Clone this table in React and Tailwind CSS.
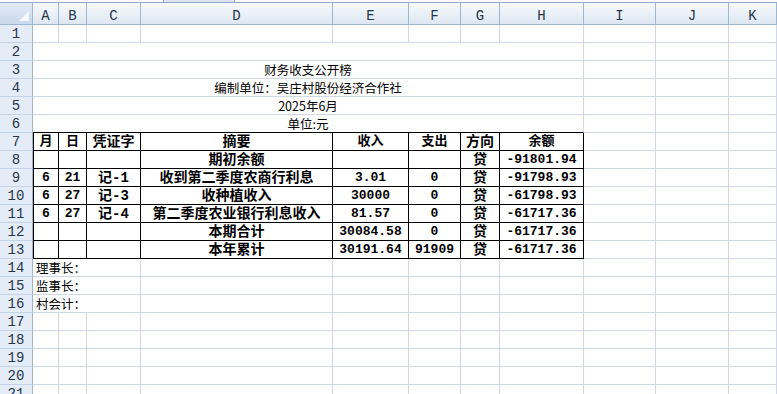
import React from 'react';

const COLS = ['A', 'B', 'C', 'D', 'E', 'F', 'G', 'H', 'I', 'J', 'K'];

const cell = 'border-r border-b border-[#d0d7e5] overflow-hidden whitespace-nowrap flex items-center leading-[16px]';
const rowHead = "bg-[#e4ecf7] border-r border-r-[#9eb6ce] border-b border-b-[#c5d3e6] flex items-center justify-center pt-[2px] leading-[15px] text-[14px] text-[#27364a] font-['Liberation_Mono',monospace]";
const tableCell = 'border-r border-b border-black overflow-hidden whitespace-nowrap flex items-center justify-center font-bold leading-[16px]';

const title = ['', '财务收支公开榜', '编制单位：吴庄村股份经济合作社', '2025年6月', '单位:元'];

const rows = [
  ['月', '日', '凭证字', '摘要', '收入', '支出', '方向', '余额'],
  ['', '', '', '期初余额', '', '', '贷', '-91801.94'],
  ['6', '21', '记-1', '收到第二季度农商行利息', '3.01', '0', '贷', '-91798.93'],
  ['6', '27', '记-3', '收种植收入', '30000', '0', '贷', '-61798.93'],
  ['6', '27', '记-4', '第二季度农业银行利息收入', '81.57', '0', '贷', '-61717.36'],
  ['', '', '', '本期合计', '30084.58', '0', '贷', '-61717.36'],
  ['', '', '', '本年累计', '30191.64', '91909', '贷', '-61717.36'],
];

// numeric columns get the narrower mono size
const numCol = [true, true, false, false, true, true, false, true];

const signers = ['理事长：', '监事长：', '村会计：'];

function Blank({ n }) {
  return Array.from({ length: n }).map((_, i) => <div key={i} className={cell} />);
}

export default function App() {
  return (
    <div className="w-[777px] h-[394px] overflow-hidden bg-white font-['Noto_Sans_CJK_SC',sans-serif] text-black">
      {/* strip under the formula bar */}
      <div className="h-[3px] border-b border-[#8fa9cc] flex">
        <div className="ml-[163px] w-[72px] h-[2px] bg-[#dbe5f2] border-x border-[#8fa9cc]" />
      </div>

      <div className="grid grid-cols-[33px_26px_28px_54px_192px_76px_52px_39px_84px_72px_73px_1fr] grid-rows-[22px] auto-rows-[18px]">
        {/* column headers */}
        <div className="bg-gradient-to-b from-[#e3ebf6] to-[#c9d8ec] border-r border-b border-[#9eb6ce] flex items-end justify-end pr-[3px] pb-[3px]">
          <svg width="10" height="10" viewBox="0 0 10 10">
            <polygon points="10,0 10,10 0,10" fill="#f4f7fb" />
          </svg>
        </div>
        {COLS.map((c) => (
          <div
            key={c}
            className="bg-gradient-to-b from-[#f7fafd] to-[#dde7f3] border-r border-b border-[#9eb6ce] flex items-center justify-center pt-[5px] leading-[15px] text-[14px] text-[#27364a] font-['Liberation_Mono',monospace]"
          >
            {c}
          </div>
        ))}

        {/* row 1 */}
        <div className={rowHead}>1</div>
        <Blank n={11} />

        {/* rows 2-6: merged title block A:H */}
        {title.map((t, i) => (
          <React.Fragment key={i}>
            <div className={rowHead}>{i + 2}</div>
            <div
              className={`col-span-8 ${cell} justify-center text-[12.5px] ${i === 4 ? 'border-b-black' : ''}`}
            >
              {t}
            </div>
            <Blank n={3} />
          </React.Fragment>
        ))}

        {/* rows 7-13: the ledger */}
        {rows.map((r, i) => (
          <React.Fragment key={i}>
            <div className={rowHead}>{i + 7}</div>
            {r.map((v, j) => (
              <div
                key={j}
                className={`${tableCell} ${j === 0 ? 'border-l' : ''} ${
                  numCol[j] ? "text-[13px] font-['Liberation_Mono','Noto_Sans_CJK_SC',monospace]" : "text-[14px] font-['Liberation_Mono','Noto_Sans_CJK_SC',monospace]"
                }`}
              >
                {v}
              </div>
            ))}
            <Blank n={3} />
          </React.Fragment>
        ))}

        {/* rows 14-16: signatures, A:C merged */}
        {signers.map((s, i) => (
          <React.Fragment key={s}>
            <div className={rowHead}>{i + 14}</div>
            <div className={`col-span-3 ${cell} pl-[3px] text-[12.5px]`}>{s}</div>
            <Blank n={8} />
          </React.Fragment>
        ))}

        {/* rows 17-21 */}
        {[17, 18, 19, 20, 21].map((n) => (
          <React.Fragment key={n}>
            <div className={rowHead}>{n}</div>
            <Blank n={11} />
          </React.Fragment>
        ))}
      </div>
    </div>
  );
}
